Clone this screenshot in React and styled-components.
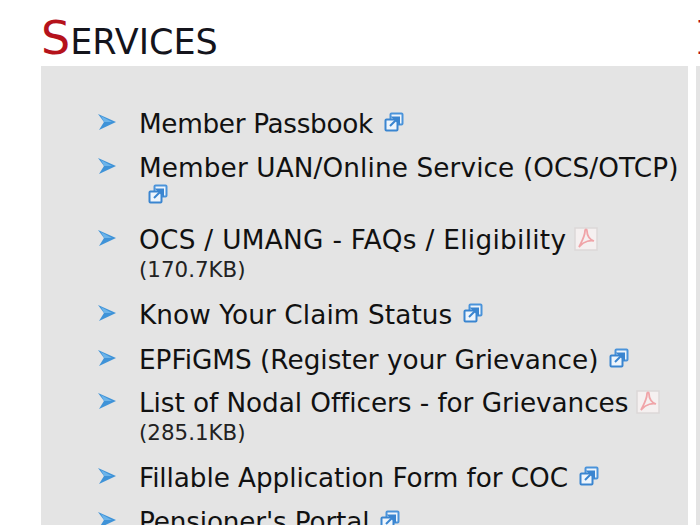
import React from "react";
import styled, { createGlobalStyle } from "styled-components";

const Global = createGlobalStyle`
  html, body { margin: 0; padding: 0; background: #fff; overflow: hidden; height: 525px; }
  body { font-family: "DejaVu Sans", Verdana, sans-serif; color: #111; }
`;
const Page = styled.div`
  display: flex;
  gap: 8px;
  width: 700px;
  height: 525px;
  overflow: hidden;
  padding-left: 41px;
  box-sizing: border-box;
`;
const Column = styled.section`
  flex: 0 0 647px;
  display: flex;
  flex-direction: column;
`;
const Heading = styled.h2`
  margin: 0;
  flex: 0 0 66px;
  display: flex;
  align-items: baseline;
  box-sizing: border-box;
  padding-top: 15px;
  font-weight: normal;
  font-size: 35px;
  line-height: 46px;
  color: #14141c;
  white-space: nowrap;
`;
const Initial = styled.span`
  font-size: 46px;
  color: #b5121b;
  font-family: ${(p) => (p.$serif ? '"DejaVu Serif", serif' : "inherit")};
`;
const Panel = styled.div`
  flex: 1;
  min-height: 0;
  background: #e4e4e4;
  padding: 44px 0 0 57px;
`;
const List = styled.ul`
  list-style: none;
  margin: 0;
  padding: 0;
`;
const Item = styled.li`
  display: flex;
  margin-bottom: ${(p) => p.$gap}px;
`;
const Bullet = styled.svg`
  flex: 0 0 18px;
  width: 18px;
  height: 16px;
  margin: 4px 23px 0 0;
`;
const Body = styled.div`
  width: 545px;
`;
const Label = styled.span`
  font-size: 26.3px;
  line-height: 28px;
  letter-spacing: ${(p) => p.$track}px;
`;
const Size = styled.div`
  font-size: 21.4px;
  line-height: 30px;
  margin-top: 1px;
  color: #222;
`;
const Glyph = styled.svg`
  display: inline-block;
  vertical-align: ${(p) => p.$lift}px;
  width: ${(p) => p.$w}px;
  height: ${(p) => p.$w}px;
  margin-left: ${(p) => p.$left}px;
  margin-top: ${(p) => p.$top || 0}px;
`;

const Arrow = () => (
  <Bullet viewBox="0 0 18 16">
    <path d="M0 0 L18 8 L1 16 L6 8 Z" fill="#3f93d8" />
    <path d="M3 2 L14 8 L6 8 Z" fill="#6cb4ea" />
  </Bullet>
);
const Ext = ({ wrapped }) => (
  <Glyph viewBox="0 0 20 20" $w={20} $lift={wrapped ? -4 : 1} $left={wrapped ? 9 : 11} $top={wrapped ? 2 : 0}>
    <rect x="6.5" y="1.5" width="12" height="11" rx="1" fill="#eef5fc" stroke="#4a93da" strokeWidth="2" />
    <rect x="1.5" y="7.5" width="12" height="11" rx="1" fill="#eef5fc" stroke="#3a85d0" strokeWidth="2" />
    <path d="M6 14 L12 8 M9 5.5 H15 V11 Z" stroke="#3a85d0" strokeWidth="2" fill="#3a85d0" />
  </Glyph>
);
const Pdf = () => (
  <Glyph viewBox="0 0 24 24" $w={24} $lift={-2} $left={8}>
    <rect x="1" y="1" width="22" height="22" fill="#f5f0f0" stroke="#dcd8d8" strokeWidth="1.5" />
    <path
      d="M5 20 C8 14 11 9 11 4 C11 2 13 2 13 4 C13 9 16 13 20 14 C17 13 10 14 6 19 Z"
      fill="none"
      stroke="#f0a4a8"
      strokeWidth="1.8"
    />
  </Glyph>
);

const items = [
  { t: "Member Passbook", i: "e", g: 16, k: -0.33 },
  { t: "Member UAN/Online Service (OCS/OTCP)", i: "e", g: 22, k: 0.11, w: true },
  { t: "OCS / UMANG - FAQs / Eligibility", i: "p", s: "(170.7KB)", g: 16, k: 0.31 },
  { t: "Know Your Claim Status", i: "e", g: 17, k: 0.1 },
  { t: "EPFiGMS (Register your Grievance)", i: "e", g: 15, k: 0 },
  { t: "List of Nodal Officers - for Grievances", i: "p", s: "(285.1KB)", g: 16, k: -0.07 },
  { t: "Fillable Application Form for COC", i: "e", g: 16, k: -0.08 },
  { t: "Pensioner's Portal", i: "e", g: 16, k: -0.17 },
];

export default function App() {
  return (
    <Page>
      <Global />
      <Column>
        <Heading>
          <Initial>S</Initial>ERVICES
        </Heading>
        <Panel>
          <List>
            {items.map((it) => (
              <Item key={it.t} $gap={it.g}>
                <Arrow />
                <Body>
                  <Label $track={it.k}>{it.t}</Label>
                  {it.i === "e" ? <Ext wrapped={it.w} /> : <Pdf />}
                  {it.s && <Size>{it.s}</Size>}
                </Body>
              </Item>
            ))}
          </List>
        </Panel>
      </Column>
      <Column>
        <Heading>
          <Initial $serif>I</Initial>
        </Heading>
        <Panel />
      </Column>
    </Page>
  );
}
